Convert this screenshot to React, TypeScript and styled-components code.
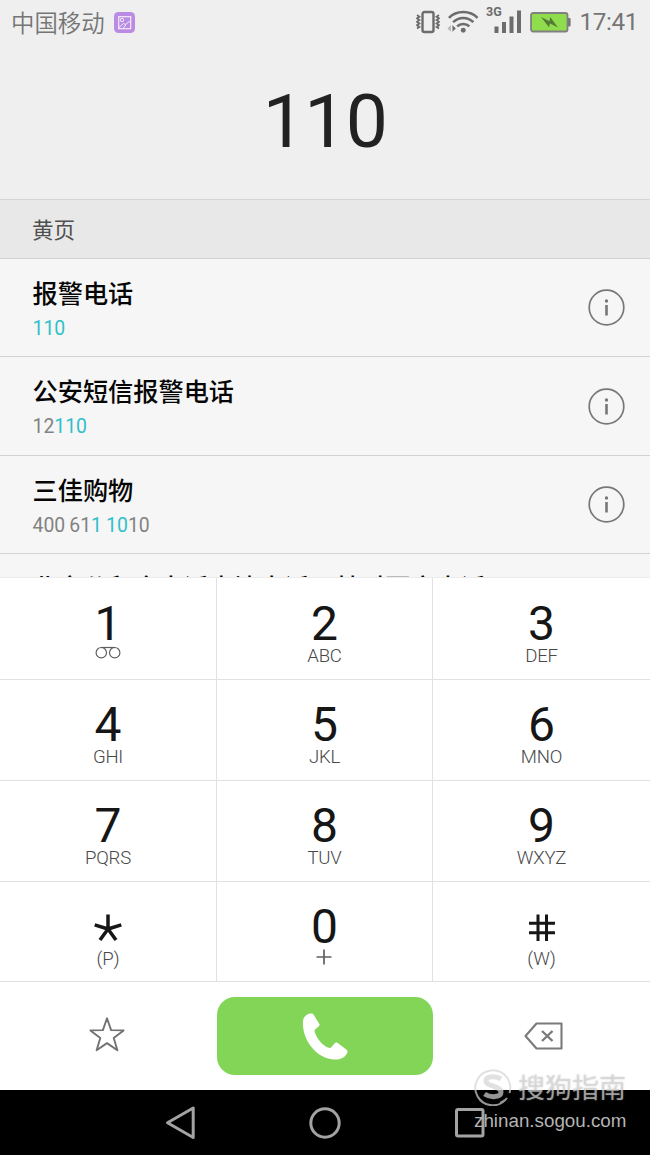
import React from 'react';
import styled, { createGlobalStyle } from 'styled-components';

const GlobalStyle = createGlobalStyle`
  * { box-sizing: border-box; }
  body { margin: 0; background: #000; font-family: Roboto, "Noto Sans CJK SC", sans-serif; }
  svg { display: block; flex: none; }
`;

const Screen = styled.div`
  position: relative;
  width: 650px;
  height: 1155px;
  overflow: hidden;
  display: flex;
  flex-direction: column;
  background: #fff;
`;

const StatusBar = styled.header`
  height: 46px;
  flex: none;
  display: flex;
  align-items: center;
  justify-content: space-between;
  padding: 0 12px 2px 11px;
  background: #efefef;
  color: #757575;
`;

const StatusGroup = styled.div`
  display: flex;
  align-items: center;
`;

const StatusIcons = styled.div`
  display: flex;
  align-items: center;
  gap: 7px;
`;

const Carrier = styled.span`
  font: 350 23.4px/44px "Noto Sans CJK SC", sans-serif;
  margin-right: 9px;
  margin-top: -1px;
`;

const Clock = styled.time`
  font-size: 24.3px;
  line-height: 44px;
  letter-spacing: -0.4px;
  margin-left: 8px;
`;

const Display = styled.div`
  height: 153px;
  flex: none;
  background: #efefef;
  color: #222;
  font-size: 75px;
  line-height: 151px;
  text-align: center;
  letter-spacing: -0.6px;
`;

const SectionHeader = styled.div`
  height: 60px;
  flex: none;
  border-top: 1px solid #d4d4d4;
  border-bottom: 1px solid #d2d2d2;
  background: #e8e8e8;
  padding-left: 32px;
  color: #505050;
  font: 400 21.6px/58px "Noto Sans CJK SC", sans-serif;
`;

const Results = styled.ul`
  height: 318px;
  flex: none;
  margin: 0;
  padding: 0;
  list-style: none;
  overflow: hidden;
  background: #f6f6f6;
`;

const ResultRow = styled.li`
  height: 98.4px;
  display: flex;
  justify-content: space-between;
  border-bottom: 1px solid #d3d3d3;
  padding: 0 25px 0 32.5px;
`;

const ResultText = styled.div<{ $peek?: boolean }>`
  padding-top: ${(p) => (p.$peek ? 9.5 : 11)}px;
`;

const ResultName = styled.div`
  font: 500 25.2px/44px "Noto Sans CJK SC", sans-serif;
  color: #060606;
  white-space: nowrap;
`;

const ResultNumber = styled.div`
  margin-top: 3px;
  font-size: 19.4px;
  line-height: 24px;
  word-spacing: -0.7px;
  color: #828282;
`;

const Match = styled.span`
  color: #31bfca;
`;

const InfoButton = styled.span`
  display: flex;
  align-items: center;
`;

const Keypad = styled.div`
  height: 405px;
  flex: none;
  display: grid;
  grid-template-columns: 217px 216px 217px;
  grid-template-rows: 102px 101px 101px 100px;
  border-top: 1px solid #ececec;
`;

const Key = styled.div`
  display: flex;
  flex-direction: column;
  align-items: center;
  justify-content: flex-end;
  padding-bottom: 10px;
  border-bottom: 1px solid #e1e1e1;
  border-right: 1px solid #e1e1e1;
  &:nth-child(3n) { border-right: 0; }
  &:nth-child(n + 10) { padding-bottom: 9px; }
`;

const Digit = styled.div`
  height: 42px;
  font-size: 48px;
  line-height: 42px;
  color: #161616;
  display: flex;
  align-items: center;
`;

const Letters = styled.div`
  height: 24px;
  font-size: 18.6px;
  font-weight: 300;
  line-height: 22px;
  letter-spacing: -0.2px;
  color: #484848;
`;

const Actions = styled.div`
  height: 108px;
  flex: none;
  display: grid;
  grid-template-columns: 213px 224px 213px;
  align-items: center;
  justify-items: center;
`;

const CallButton = styled.button`
  width: 216px;
  height: 78px;
  border: 0;
  border-radius: 18px;
  padding: 0;
  background: #82d556;
  display: flex;
  align-items: center;
  justify-content: center;
`;

const NavBar = styled.nav`
  height: 65px;
  flex: none;
  display: flex;
  align-items: center;
  justify-content: space-between;
  padding: 0 165px;
  background: #000;
`;

const Watermark = styled.div`
  position: absolute;
  right: 23px;
  top: 1066px;
  width: 153px;
  color: rgba(212, 212, 212, 0.7);
`;

const WatermarkTitle = styled.div`
  display: flex;
  align-items: center;
  gap: 6px;
  height: 41px;
  font: 400 27px/41px "Noto Sans CJK SC", sans-serif;
  text-shadow: 0 0 2px rgba(150, 150, 150, 0.4);
`;

const WatermarkUrl = styled.div`
  font: 18.8px/28px "Liberation Sans", sans-serif;
  color: #b4b4b4;
  white-space: nowrap;
`;

const GalleryBadge = () => (
  <svg width="21" height="21" viewBox="0 0 21 21" fill="none" stroke="#f4eafc">
    <rect width="21" height="21" rx="4.5" fill="#b98be3" stroke="none" />
    <rect x="4.7" y="4.7" width="12" height="12" strokeWidth="1.2" />
    <circle cx="8" cy="8" r="1.7" />
    <path d="M5 15.5l4.5-4 1.8 1 4.8-3.5M9.5 16l2.5-3.5" />
  </svg>
);

const VibrateIcon = () => (
  <svg width="24" height="24" viewBox="0 0 24 24" fill="none" stroke="#6c6c6c">
    <rect x="6.5" y="2" width="11" height="20" rx="2" strokeWidth="2.4" />
    <path d="M1 5l2.400 1.700L1 8.400l2.400 1.700L1 11.800l2.400 1.700L1 15.200l2.400 1.700L1 18.500M23 5l-2.400 1.700L23 8.400l-2.400 1.700 2.400 1.700-2.400 1.700 2.400 1.700-2.400 1.700L23 18.500" strokeWidth="1.8" />
  </svg>
);

const WifiIcon = () => (
  <svg width="32" height="24" viewBox="2.500 0 32.500 24" fill="none" stroke="#6c6c6c" strokeWidth="2.600">
    <path d="M4.500 7.800C12-.2 26-.2 33.500 7.800M8.700 12.200c5.600-5.800 15-5.800 20.600 0M12.800 16.500c3.400-3.400 9-3.400 12.400 0" />
    <circle cx="19" cy="20.300" r="2.500" fill="#6c6c6c" stroke="none" />
    <path d="M6.500 15v7L3 18.500z" fill="#b8b8b8" stroke="none" />
    <path d="M8 15v7l3.500-3.500z" fill="#6c6c6c" stroke="none" />
  </svg>
);

const SignalIcon = () => (
  <svg width="36" height="30" viewBox="0 3 36 30" fill="#6c6c6c" overflow="visible">
    <text x="0" y="12" fontFamily="Roboto, sans-serif" fontSize="12.5" fontWeight="700">3G</text>
    <rect x="8.500" y="22.500" width="4" height="6.500" />
    <rect x="16" y="18" width="4" height="11" />
    <rect x="23.500" y="12.500" width="4" height="16.500" />
    <rect x="31" y="6.500" width="4" height="22.500" />
  </svg>
);

const BatteryIcon = () => (
  <svg width="42" height="21" viewBox="-1 0 42 21">
    <rect x="1" y="1" width="36.500" height="18.500" rx="2" fill="#8fdc4c" stroke="#808080" strokeWidth="1.800" />
    <path d="M38 6h1.600q1 0 1 1v6.500q0 1-1 1H38z" fill="#777" />
    <path d="M11 5l8.500 4.200.7-4.200 7.800 10.500-8-4-1 3.800z" fill="#557a35" />
  </svg>
);

const InfoIcon = () => (
  <svg width="37" height="37" viewBox="0 0 37 37">
    <circle cx="18.500" cy="18.500" r="17.300" fill="none" stroke="#777" strokeWidth="1.700" />
    <circle cx="18.500" cy="12" r="1.700" fill="#777" />
    <rect x="17.200" y="16" width="2.600" height="10.500" fill="#777" />
  </svg>
);

const VoicemailIcon = () => (
  <svg width="26" height="24" viewBox="0 0 26 24" fill="none" stroke="#606060" strokeWidth="1.200">
    <circle cx="6.300" cy="7.700" r="5.200" />
    <circle cx="19.700" cy="7.700" r="5.200" />
    <path d="M6.300 2.500h13.400" />
  </svg>
);

const StarKeyIcon = () => (
  <svg width="30" height="42" viewBox="0 7 30 42" fill="none" stroke="#161616" strokeWidth="3.500">
    <path d="M15 30V15.500M15 30L1.700 25.800M15 30l13.300-4.200M15 30L7 41M15 30l8 11" />
  </svg>
);

const HashKeyIcon = () => (
  <svg width="26" height="42" viewBox="0 7 26 42" fill="none" stroke="#161616" strokeWidth="3">
    <path d="M9 15.500V42M17.500 15.500V42M0 24.300h26M0 33.700h26" />
  </svg>
);

const PlusIcon = () => (
  <svg width="18" height="24" viewBox="0 1 18 24" stroke="#606060" strokeWidth="1.700">
    <path d="M8 2.500v15M.5 10h15" />
  </svg>
);

const FavoriteIcon = () => (
  <svg width="36" height="38" viewBox="0 1 36 38" fill="none" stroke="#727272" strokeWidth="1.900" strokeLinejoin="round">
    <path d="M18 2.300l4.100 11.800 12.500.300-9.900 7.600 3.700 12.300L18 27.100 7.600 34.300 11.300 22 1.400 14.400l12.500-.3z" />
  </svg>
);

const HandsetIcon = () => (
  <svg width="48" height="48" viewBox="0 0 48 48" fill="#fff">
    <path d="M2 9C2.500 4 7 .8 11 1.500c1.200.2 1.800 1.500 2.600 2.800l4.600 7.500c.6 1 .4 1.800-.4 2.500l-3.700 3.300c-.7.7-.6 1.800-.2 3 2.200 6.700 7.400 12.600 13 15 1.600.6 2.600.6 3.600-.5l3-3.600c.9-1.100 2-1.300 3.200-.5l8.300 6.200c1.200.9 1.800 1.800 1.300 3.200-1.600 4.800-6.800 7.500-13.800 7.100C15 46.500.5 27 2 9z" />
  </svg>
);

const BackspaceIcon = () => (
  <svg width="39" height="28" viewBox="0 0 39 28" fill="none" stroke="#7a7a7a" strokeWidth="2.100" strokeLinejoin="round">
    <path d="M1.500 14L12.500 1.500h25v25h-25z" />
    <path d="M18 9l10.500 10M28.500 9L18 19" strokeWidth="2.400" />
  </svg>
);

const BackIcon = () => (
  <svg width="32" height="36" viewBox="0 0 32 36" fill="none" stroke="#a3a3a3" strokeWidth="3" strokeLinejoin="round">
    <path d="M28.200 3v29.500L2.500 17.700z" />
  </svg>
);

const HomeIcon = () => (
  <svg width="34" height="32" viewBox="0 0 34 32" fill="none" stroke="#a3a3a3" strokeWidth="3">
    <circle cx="16" cy="16" r="14.200" />
  </svg>
);

const RecentsIcon = () => (
  <svg width="30" height="30" viewBox="0 0 30 30" fill="none" stroke="#a3a3a3" strokeWidth="3">
    <rect x="1.500" y="1.500" width="26.500" height="26.500" rx="1.500" />
  </svg>
);

const SogouIcon = () => (
  <svg width="38" height="38" viewBox="0 0 38 38" fill="none" stroke="currentColor">
    <path d="M33 30A17.500 17.500 0 1 1 35.500 25M31 32a17.500 17.500 0 0 1-5 3" strokeWidth="2" />
    <path d="M27 11c-5-3.500-15-3-15 2 0 5.500 15 5 15 11 0 5.500-10.500 6-16.500 2" strokeWidth="5" />
  </svg>
);

type Part = { text: string; hit?: boolean };

const results: { name: string; number: Part[]; peek?: boolean }[] = [
  { name: '报警电话', number: [{ text: '110', hit: true }] },
  { name: '公安短信报警电话', number: [{ text: '12' }, { text: '110', hit: true }] },
  { name: '三佳购物', number: [{ text: '400 61' }, { text: '1 10', hit: true }, { text: '10' }] },
  { name: '北京公积金电话中沈电话局林对百方电话', number: [], peek: true },
];

const keys: { id: string; digit: React.ReactNode; letters: React.ReactNode }[] = [
  { id: '1', digit: '1', letters: <VoicemailIcon /> },
  { id: '2', digit: '2', letters: 'ABC' },
  { id: '3', digit: '3', letters: 'DEF' },
  { id: '4', digit: '4', letters: 'GHI' },
  { id: '5', digit: '5', letters: 'JKL' },
  { id: '6', digit: '6', letters: 'MNO' },
  { id: '7', digit: '7', letters: 'PQRS' },
  { id: '8', digit: '8', letters: 'TUV' },
  { id: '9', digit: '9', letters: 'WXYZ' },
  { id: 'star', digit: <StarKeyIcon />, letters: '(P)' },
  { id: '0', digit: '0', letters: <PlusIcon /> },
  { id: 'hash', digit: <HashKeyIcon />, letters: '(W)' },
];

export default function App() {
  return (
    <Screen>
      <GlobalStyle />
      <StatusBar>
        <StatusGroup>
          <Carrier>中国移动</Carrier>
          <GalleryBadge />
        </StatusGroup>
        <StatusGroup>
          <StatusIcons>
            <VibrateIcon />
            <WifiIcon />
            <SignalIcon />
            <BatteryIcon />
          </StatusIcons>
          <Clock>17:41</Clock>
        </StatusGroup>
      </StatusBar>
      <Display>110</Display>
      <SectionHeader>黄页</SectionHeader>
      <Results>
        {results.map((r) => (
          <ResultRow key={r.name}>
            <ResultText $peek={r.peek}>
              <ResultName>{r.name}</ResultName>
              <ResultNumber>
                {r.number.map((p, i) => (p.hit ? <Match key={i}>{p.text}</Match> : <span key={i}>{p.text}</span>))}
              </ResultNumber>
            </ResultText>
            <InfoButton><InfoIcon /></InfoButton>
          </ResultRow>
        ))}
      </Results>
      <Keypad>
        {keys.map((k) => (
          <Key key={k.id}>
            <Digit>{k.digit}</Digit>
            <Letters>{k.letters}</Letters>
          </Key>
        ))}
      </Keypad>
      <Actions>
        <FavoriteIcon />
        <CallButton aria-label="拨号"><HandsetIcon /></CallButton>
        <BackspaceIcon />
      </Actions>
      <NavBar>
        <BackIcon />
        <HomeIcon />
        <RecentsIcon />
      </NavBar>
      <Watermark>
        <WatermarkTitle><SogouIcon />搜狗指南</WatermarkTitle>
        <WatermarkUrl>zhinan.sogou.com</WatermarkUrl>
      </Watermark>
    </Screen>
  );
}
